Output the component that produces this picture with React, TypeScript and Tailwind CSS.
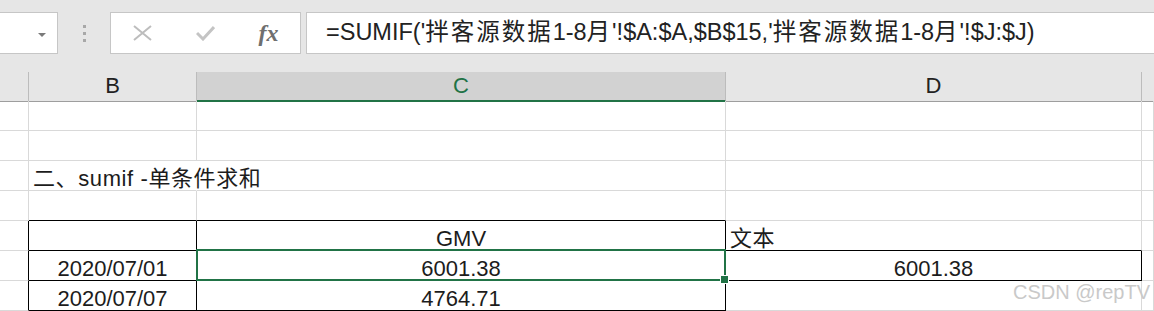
import React from "react";

const font = "font-['Liberation_Sans','Noto_Sans_CJK_SC',sans-serif]";

interface CellSpec {
  text?: string;
  align?: "left" | "center";
  rb?: boolean; // black right border
  bb?: boolean; // black bottom border
  noRight?: boolean; // text spills over, hide gridline
  selected?: boolean;
}

const rows: CellSpec[][] = [
  [{}, {}, {}, {}, {}],
  [{}, {}, {}, {}, {}],
  [{}, { text: "二、sumif -单条件求和", align: "left", noRight: true }, {}, {}, {}],
  [{}, { bb: true }, { bb: true }, {}, {}],
  [{ rb: true }, { rb: true, bb: true }, { text: "GMV", rb: true, bb: true }, { text: "文本", align: "left", bb: true }, {}],
  [{ rb: true }, { text: "2020/07/01", rb: true, bb: true }, { text: "6001.38", rb: true, bb: true, selected: true }, { text: "6001.38", rb: true, bb: true }, {}],
  [{ rb: true }, { text: "2020/07/07", rb: true, bb: true }, { text: "4764.71", rb: true, bb: true }, {}, {}],
];

const Cell: React.FC<{ c: CellSpec }> = ({ c }) => {
  const right = c.noRight
    ? "border-r-white"
    : c.rb
    ? "border-r-black"
    : "border-r-[#d9d9d9]";
  const bottom = c.bb ? "border-b-black" : "border-b-[#d9d9d9]";
  return (
    <div
      className={`relative flex items-end border-r border-b ${right} ${bottom} whitespace-nowrap text-[22px] leading-[22px] text-[#1c1c1c] ${
        c.align === "left" ? "justify-start pl-1 tracking-[0.6px]" : "justify-center"
      }`}
    >
      {c.text && <span className="relative z-10">{c.text}</span>}
      {c.selected && (
        <div className="absolute -top-[2px] -left-[1px] -right-[1px] -bottom-[1px] border-2 border-[#217346] z-20">
          <div className="absolute -right-[4px] -bottom-[4px] w-[7px] h-[7px] bg-[#217346] outline outline-1 outline-white" />
        </div>
      )}
    </div>
  );
};

const Cjk: React.FC<{ children: React.ReactNode }> = ({ children }) => (
  <span className="tracking-[2px]">{children}</span>
);

export default function App() {
  return (
    <div className={`relative w-[1154px] h-[311px] overflow-hidden bg-white ${font}`}>
      {/* Formula bar */}
      <div className="flex items-start h-[72px] pt-3 bg-[#e6e6e6]">
        <div className="relative w-[58px] h-[42px] bg-white border border-l-0 border-[#c6c6c6]">
          <div className="absolute left-[38px] top-[20px] w-0 h-0 border-l-[4px] border-r-[4px] border-t-[4px] border-l-transparent border-r-transparent border-t-[#7a7a7a]" />
        </div>
        <div className="w-[52px] h-[42px] flex flex-col items-center justify-center gap-[4px] pl-[1px]">
          <div className="w-[3px] h-[3px] bg-[#a8a8a8]" />
          <div className="w-[3px] h-[3px] bg-[#a8a8a8]" />
          <div className="w-[3px] h-[3px] bg-[#a8a8a8]" />
        </div>
        <div className="flex w-[191px] h-[42px] bg-white border border-[#c6c6c6]">
          <div className="w-[63px] flex items-center justify-center">
            <svg width="19" height="16" viewBox="0 0 19 16">
              <path d="M1 1 L18 15 M18 1 L1 15" stroke="#bdbdbd" strokeWidth="2" fill="none" />
            </svg>
          </div>
          <div className="w-[63px] flex items-center justify-center">
            <svg width="19" height="16" viewBox="0 0 19 16">
              <path d="M1 8 L7 14 L18 2" stroke="#c4c4c4" strokeWidth="3" fill="none" />
            </svg>
          </div>
          <div className="w-[63px] flex items-center justify-center font-['Liberation_Serif',serif] italic font-semibold text-[24px] text-[#6f6f6f]">
            fx
          </div>
        </div>
        <div className="ml-[5px] flex-1 h-[42px] bg-white border border-r-0 border-[#c6c6c6] flex items-center pl-[19px] text-[23.5px] text-[#222] whitespace-nowrap">
          =SUMIF('<Cjk>拌客源数据</Cjk>1-8<Cjk>月</Cjk>'!$A:$A,$B$15,'<Cjk>拌客源数据</Cjk>1-8<Cjk>月</Cjk>'!$J:$J)
        </div>
      </div>

      {/* Column headers */}
      <div className="grid grid-cols-[29px_168px_529px_416px_1fr] h-[29px] bg-[#e6e6e6] text-[22px] leading-[28px]">
        <div className="border-r border-b border-r-[#bcbcbc] border-b-[#9e9e9e]" />
        <div className="flex justify-center border-r border-b border-r-[#bcbcbc] border-b-[#9e9e9e] text-[#222]">B</div>
        <div className="flex justify-center border-r border-b-2 border-r-[#bcbcbc] border-b-[#217346] bg-[#d2d2d2] text-[#217346]">C</div>
        <div className="flex justify-center border-r border-b border-r-[#bcbcbc] border-b-[#9e9e9e] text-[#222]">D</div>
        <div className="border-b border-b-[#9e9e9e]" />
      </div>

      {/* Sheet rows */}
      {rows.map((r, i) => (
        <div key={i} className="grid grid-cols-[29px_168px_529px_416px_1fr] h-[30px]">
          {r.map((c, j) => (
            <Cell key={j} c={c} />
          ))}
        </div>
      ))}

      {/* watermark */}
      <div className="absolute left-[1013px] top-[282px] text-[20px] leading-[20px] text-[#c9c9c9] whitespace-nowrap">
        CSDN @repTV
      </div>
    </div>
  );
}
